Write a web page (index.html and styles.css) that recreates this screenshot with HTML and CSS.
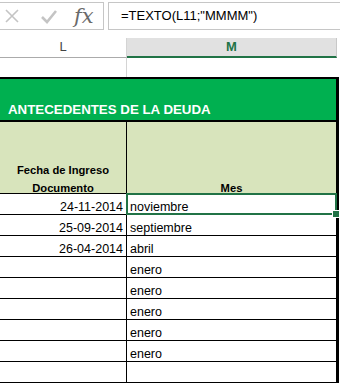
FILE: index.html
```html
<!DOCTYPE html>
<html lang="es">
<head>
<meta charset="UTF-8">
<title>TEXTO mes</title>
<link rel="stylesheet" href="styles.css">
</head>
<body>

<div class="formula-bar">
    <div class="fx-box">
        <svg class="icon" width="18" height="18" viewBox="0 0 18 18">
            <path d="M3 3 L15 15 M15 3 L3 15" stroke="#c4c4c4" stroke-width="1.6" fill="none"/>
        </svg>
        <svg class="icon" width="18" height="18" viewBox="0 0 18 18">
            <path d="M2 10 L7 15 L16 4" stroke="#c4c4c4" stroke-width="2.6" fill="none"/>
        </svg>
        <span class="fx">fx</span>
    </div>
    <div class="formula-input">=TEXTO(L11;"MMMM")</div>
</div>

<div class="col-headers">
    <div class="col-head col-l">L</div>
    <div class="col-head col-m">M</div>
</div>

<div class="blank-row">
    <div class="cell-l"></div>
    <div></div>
</div>

<div class="sheet">
    <div class="title">ANTECEDENTES DE LA DEUDA</div>
    <div class="head-row">
        <div class="head-cell head-l"><span>Fecha de Ingreso<br>Documento</span></div>
        <div class="head-cell"><span>Mes</span></div>
    </div>
    <div class="row">
        <div class="date">24-11-2014</div>
        <div class="month selected">noviembre</div>
    </div>
    <div class="row">
        <div class="date">25-09-2014</div>
        <div class="month">septiembre</div>
    </div>
    <div class="row">
        <div class="date">26-04-2014</div>
        <div class="month">abril</div>
    </div>
    <div class="row">
        <div class="date"></div>
        <div class="month">enero</div>
    </div>
    <div class="row">
        <div class="date"></div>
        <div class="month">enero</div>
    </div>
    <div class="row">
        <div class="date"></div>
        <div class="month">enero</div>
    </div>
    <div class="row">
        <div class="date"></div>
        <div class="month">enero</div>
    </div>
    <div class="row">
        <div class="date"></div>
        <div class="month">enero</div>
    </div>
    <div class="row">
        <div class="date"></div>
        <div class="month"></div>
    </div>
</div>

</body>
</html>
```

FILE: styles.css
```css
/* Excel-like sheet fragment */
body {
    margin: 0;
    width: 340px;
    height: 383px;
    overflow: hidden;
    background: #fff;
    font-family: "Liberation Sans", Arial, sans-serif;
    color: #000;
}

.formula-bar {
    display: flex;
    gap: 4px;
    height: 38px;
    padding-top: 2px;
    box-sizing: border-box;
}
.fx-box {
    width: 104px;
    height: 28px;
    border: 1px solid #c6c6c6;
    border-left: none;
    box-sizing: border-box;
    display: flex;
    align-items: center;
    padding-left: 3px;
    gap: 19px;
}
.fx {
    font-family: "DejaVu Serif", "Liberation Serif", serif;
    font-style: italic;
    font-size: 21px;
    color: #6a6a6a;
    margin-left: -3px;
    line-height: 24px;
}
.formula-input {
    flex: 1;
    height: 28px;
    border: 1px solid #c6c6c6;
    border-right: none;
    box-sizing: border-box;
    font-size: 13px;
    line-height: 26px;
    padding-left: 12px;
}

.col-headers {
    display: flex;
    height: 20px;
}
.col-head {
    box-sizing: border-box;
    text-align: center;
    font-size: 13px;
    line-height: 18px;
}
.col-l {
    width: 127px;
    color: #444;
    border-bottom: 1px solid #ababab;
    border-right: 1px solid #d4d4d4;
}
.col-m {
    width: 210px;
    background: #e1e1e1;
    color: #217346;
    font-weight: bold;
    border-bottom: 2px solid #217346;
    border-right: 1px solid #c8c8c8;
}

.blank-row {
    display: flex;
    height: 19px;
}
.cell-l {
    width: 127px;
    border-right: 1px solid #d4d4d4;
    box-sizing: border-box;
}

.sheet {
    width: 339px;
    border-top: 2px solid #000;
    border-right: 3px solid #000;
    box-sizing: border-box;
}
.title {
    height: 43px;
    background: #00b050;
    color: #fff;
    font-weight: bold;
    font-size: 13.3px;
    box-sizing: border-box;
    border-bottom: 2px solid #000;
    display: flex;
    align-items: flex-end;
    padding: 0 0 3px 8px;
}
.head-row {
    display: grid;
    grid-template-columns: 127px 1fr;
    height: 72px;
    background: #d8e4bc;
    border-bottom: 1px solid #000;
    box-sizing: border-box;
}
.head-cell {
    font-weight: bold;
    font-size: 11.2px;
    line-height: 18px;
    text-align: center;
    display: flex;
    align-items: flex-end;
    justify-content: center;
}
.head-cell span {
    margin-bottom: -4px;
}
.head-l {
    border-right: 1px solid #000;
}

.row {
    display: grid;
    grid-template-columns: 127px 1fr;
    height: 21px;
    border-bottom: 1px solid #000;
    box-sizing: border-box;
    font-size: 12.5px;
}
.date {
    border-right: 1px solid #000;
    text-align: right;
    padding-right: 3px;
    line-height: 27px;
    height: 20px;
}
.month {
    padding-left: 3px;
    line-height: 27px;
    height: 20px;
    position: relative;
}
.selected::after {
    content: "";
    position: absolute;
    top: -1px;
    left: -1px;
    right: -1px;
    bottom: -1px;
    border: 2px solid #217346;
}
.selected::before {
    content: "";
    position: absolute;
    right: -4px;
    bottom: -4px;
    width: 6px;
    height: 6px;
    background: #217346;
    border: 1px solid #fff;
    z-index: 1;
}
```
